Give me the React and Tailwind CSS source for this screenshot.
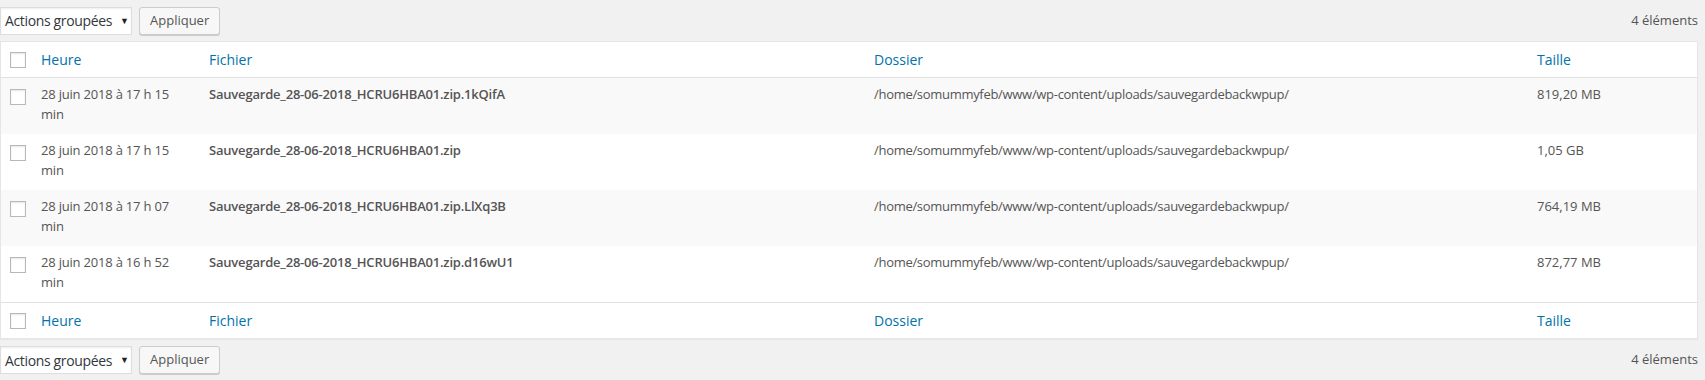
import React from "react";

const rows = [
  { date: "28 juin 2018 à 17 h 15 min", file: "Sauvegarde_28-06-2018_HCRU6HBA01.zip.1kQifA", size: "819,20 MB" },
  { date: "28 juin 2018 à 17 h 15 min", file: "Sauvegarde_28-06-2018_HCRU6HBA01.zip", size: "1,05 GB" },
  { date: "28 juin 2018 à 17 h 07 min", file: "Sauvegarde_28-06-2018_HCRU6HBA01.zip.LlXq3B", size: "764,19 MB" },
  { date: "28 juin 2018 à 16 h 52 min", file: "Sauvegarde_28-06-2018_HCRU6HBA01.zip.d16wU1", size: "872,77 MB" },
];

const DIR = "/home/somummyfeb/www/wp-content/uploads/sauvegardebackwpup/";
const cols = "grid grid-cols-[30px_168px_665px_663px_1fr]";

const Check = () => (
  <span className="block w-4 h-4 bg-white border border-[#b4b9be] shadow-[inset_0_1px_2px_rgba(0,0,0,0.1)]" />
);

const TableNav = ({ top }) => (
  <div className={`flex items-center justify-between h-[41px] pr-[7px] ${top ? "pt-[0px]" : "pt-[1px]"}`}>
    <div className="flex items-center gap-[7px]">
      <div className="relative w-[132px] h-[28px] bg-white border border-[#ddd] shadow-[inset_0_1px_2px_rgba(0,0,0,0.07)] flex items-center pl-[4px] text-[14px] tracking-[-0.35px] text-[#32373c]">
        Actions groupées
        <span className="absolute left-[119px] top-[8px] text-[9px] leading-none text-[#222]">▼</span>
      </div>
      <button className="h-[28px] px-[10px] bg-[#f7f7f7] border border-[#ccc] rounded-[3px] shadow-[0_1px_0_#ccc] text-[13px] text-[#555]">
        Appliquer
      </button>
    </div>
    <span className="text-[13px] text-[#555]">4 éléments</span>
  </div>
);

const HeadRow = ({ footer }) => (
  <div className={`${cols} h-[36px] items-center bg-white ${footer ? "border-t" : "border-b"} border-[#e1e1e1] text-[14px] text-[#0073aa]`}>
    <div className="pl-[9px]"><Check /></div>
    <div className="pl-[10px]">Heure</div>
    <div className="pl-[10px]">Fichier</div>
    <div className="pl-[10px]">Dossier</div>
    <div className="pl-[10px]">Taille</div>
  </div>
);

export default function App() {
  return (
    <div className="w-[1705px] h-[380px] bg-[#f1f1f1] font-['Open_Sans',sans-serif] overflow-hidden">
      <TableNav top />
      <div className="w-[1698px] bg-white border border-[#e5e5e5] shadow-[0_1px_1px_rgba(0,0,0,0.04)]">
        <HeadRow />
        {rows.map((r, i) => (
          <div key={i} className={`${cols} h-[56px] text-[13px] leading-[19.5px] text-[#555] ${i % 2 === 0 ? "bg-[#f9f9f9]" : "bg-white"}`}>
            <div className="pl-[9px] pt-[11px]"><Check /></div>
            <div className="px-[10px] pt-[7px] tracking-[-0.2px]">{r.date}</div>
            <div className="px-[10px] pt-[7px] font-semibold tracking-[-0.2px]">{r.file}</div>
            <div className="px-[10px] pt-[7px] tracking-[-0.3px]">{DIR}</div>
            <div className="px-[10px] pt-[7px]">{r.size}</div>
          </div>
        ))}
        <HeadRow footer />
      </div>
      <TableNav />
    </div>
  );
}
